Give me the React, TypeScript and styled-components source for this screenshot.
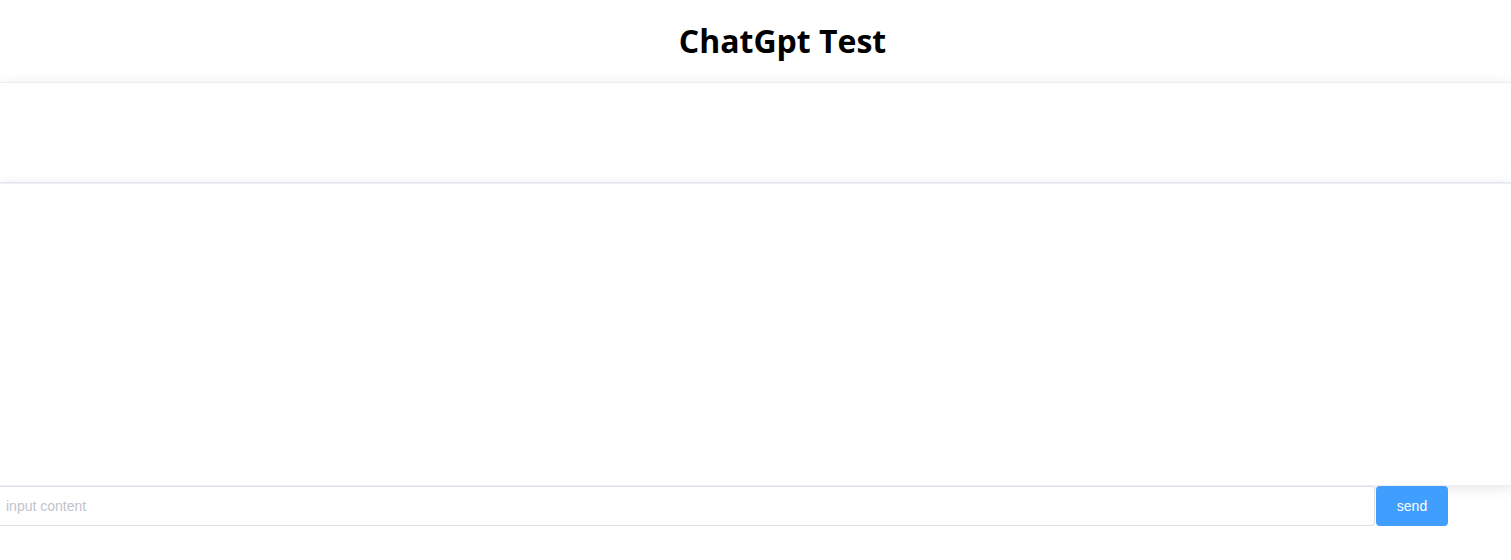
import styled, { createGlobalStyle } from 'styled-components';

const GlobalStyle = createGlobalStyle`
  html, body {
    margin: 0;
    padding: 0;
    background: #fff;
  }

  body {
    font-family: "Liberation Sans", Arial, sans-serif;
    overflow: hidden;
  }

  * {
    box-sizing: border-box;
  }
`;

const Page = styled.div`
  display: flex;
  flex-direction: column;
  width: 100%;
`;

const Header = styled.header`
  display: flex;
  align-items: center;
  justify-content: center;
  height: 82px;
  padding-left: 54px;
  padding-bottom: 2px;
`;

const Title = styled.h1`
  margin: 0;
  font-family: "Open Sans", "Noto Sans", sans-serif;
  font-size: 32px;
  font-weight: 700;
  color: #000;
`;

const Card = styled.section<{ $height: number }>`
  height: ${(p) => p.$height}px;
  background: #fff;
  border-top: 1px solid #ebeef5;
  border-bottom: 1px solid #ebeef5;
  box-shadow: 0 2px 12px 0 rgba(0, 0, 0, 0.1);
`;

const InputRow = styled.div`
  display: flex;
  align-items: stretch;
  height: 40px;
  padding-right: 63px;
`;

const Input = styled.input`
  flex: 1;
  min-width: 0;
  height: 40px;
  padding: 0 6px;
  border: 1px solid #dcdfe6;
  border-left: none;
  border-radius: 0 4px 4px 0;
  background: #fff;
  font-family: inherit;
  font-size: 14px;
  color: #606266;
  outline: none;

  &::placeholder {
    color: #c0c4cc;
  }
`;

const SendButton = styled.button`
  width: 72px;
  height: 40px;
  margin-left: 1px;
  border: none;
  border-radius: 4px;
  background: #409eff;
  color: #fff;
  font-family: inherit;
  font-size: 14px;
  cursor: pointer;
`;

export default function App() {
  return (
    <>
      <GlobalStyle />
      <Page>
        <Header>
          <Title>ChatGpt Test</Title>
        </Header>
        <Card $height={101} />
        <Card $height={303} />
        <InputRow>
          <Input placeholder="input content" />
          <SendButton>send</SendButton>
        </InputRow>
      </Page>
    </>
  );
}
